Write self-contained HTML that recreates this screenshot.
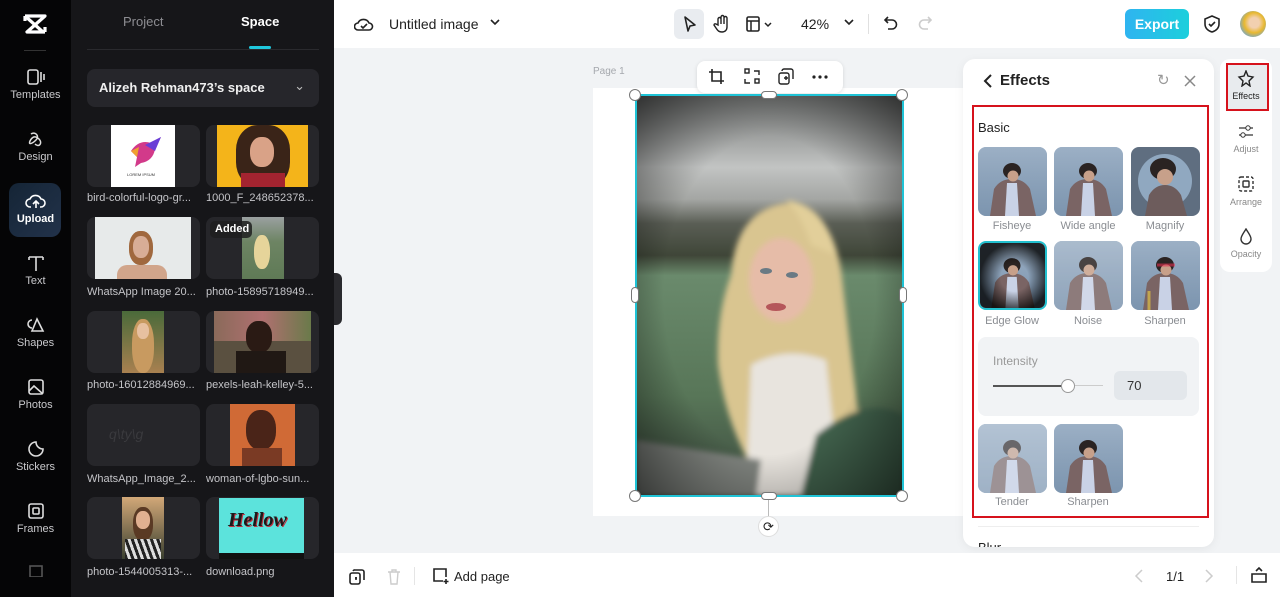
<!DOCTYPE html>
<html><head><meta charset="utf-8">
<style>
*{box-sizing:border-box;margin:0;padding:0}
body{width:1280px;height:597px;overflow:hidden;font-family:"Liberation Sans",sans-serif;background:#f1f3f5;position:relative}
.abs{position:absolute}
.rail{left:0;top:0;width:71px;height:597px;background:#050506}
.ri{position:absolute;left:0;width:71px;text-align:center;color:#c9c9cc;font-size:11px}
.ri svg{display:block;margin:0 auto 3px}
.panel{left:71px;top:0;width:263px;height:597px;background:#161619}
.tile{position:absolute;width:113px;height:62px;background:#26262a;border-radius:8px;overflow:hidden}
.lab{position:absolute;color:#c4c4c8;font-size:11px;white-space:nowrap}
.top{left:334px;top:0;width:946px;height:48px;background:#fff}
.bot{left:334px;top:553px;width:946px;height:44px;background:#fff}
.eff{left:963px;top:59px;width:251px;height:488px;background:#fff;border-radius:12px;box-shadow:0 2px 10px rgba(0,0,0,.06);overflow:hidden}
.th{position:absolute;width:69px;height:69px;border-radius:8px;overflow:hidden}
.tl{position:absolute;width:80px;text-align:center;font-size:11px;color:#8a8d92}
</style></head><body>
<svg width="0" height="0" style="position:absolute"><defs>
<symbol id="man" viewBox="0 0 69 69"><rect width="69" height="69" fill="#8aa2bb"/><rect y="0" width="69" height="69" fill="url(#wv)"/><path d="M12 69 L16 42 Q22 32 34 32 Q46 32 52 42 L58 69Z" fill="#7a6464"/><path d="M29 36 L39 36 L41 69 L27 69Z" fill="#c9d2e6"/><ellipse cx="34" cy="24" rx="9" ry="8" fill="#2a2322"/><ellipse cx="35" cy="29" rx="5.5" ry="5.5" fill="#c7a08a"/></symbol>
<linearGradient id="wv" x1="0" y1="0" x2="0" y2="1"><stop offset="0" stop-color="#a8b9cc" stop-opacity=".6"/><stop offset="1" stop-color="#6f88a3" stop-opacity=".5"/></linearGradient>
</defs></svg>

<div class="abs rail">
 <svg class="abs" style="left:22px;top:13px" width="26" height="22" viewBox="0 0 26 22"><path d="M3 3 L23 3 L5 19 L23 19 M3 3 L21 19 M3 3 L3 8 M23 19 L23 14" stroke="#fff" stroke-width="3.2" fill="none" stroke-linejoin="round"/></svg>
 <div class="abs" style="left:24px;top:50px;width:22px;height:1px;background:#333"></div>
 <div class="ri" style="top:68px"><svg width="20" height="18"><rect x="2" y="2" width="10" height="14" rx="2" fill="none" stroke="#ddd" stroke-width="1.6"/><path d="M15 4v10M18 6v6" stroke="#ddd" stroke-width="1.6"/></svg>Templates</div>
 <div class="ri" style="top:130px"><svg width="20" height="18"><path d="M5 4c4-3 9 2 5 6s-8 5-6 1 5-6 9-2 0 9-4 5" stroke="#ddd" stroke-width="1.5" fill="none"/></svg>Design</div>
 <div class="abs" style="left:9px;top:183px;width:52px;height:54px;border-radius:10px;background:linear-gradient(135deg,#152536,#22324a)"></div>
 <div class="ri" style="top:192px;color:#fff;font-weight:bold"><svg width="22" height="18"><path d="M6 15H5a4 4 0 010-8 6 6 0 0111 0 4 4 0 010 8h-1M11 16V9M8 12l3-3 3 3" stroke="#fff" stroke-width="1.6" fill="none"/></svg>Upload</div>
 <div class="ri" style="top:254px"><svg width="20" height="18"><path d="M3 3h14M10 3v14M3 3v3M17 3v3" stroke="#ddd" stroke-width="1.6" fill="none"/></svg>Text</div>
 <div class="ri" style="top:316px"><svg width="20" height="18"><path d="M6 4a4 4 0 100 8M11 3l6 12H6z" stroke="#ddd" stroke-width="1.6" fill="none"/></svg>Shapes</div>
 <div class="ri" style="top:378px"><svg width="20" height="18"><rect x="3" y="2" width="14" height="14" rx="2" fill="none" stroke="#ddd" stroke-width="1.6"/><path d="M3 13l5-5 9 8" stroke="#ddd" stroke-width="1.6" fill="none"/></svg>Photos</div>
 <div class="ri" style="top:440px"><svg width="20" height="18"><path d="M10 2a7 7 0 107 7 7 7 0 01-7-7z" stroke="#ddd" stroke-width="1.6" fill="none"/></svg>Stickers</div>
 <div class="ri" style="top:502px"><svg width="20" height="18"><rect x="3" y="2" width="14" height="14" rx="2" fill="none" stroke="#ddd" stroke-width="1.6"/><rect x="7" y="6" width="6" height="6" rx="1" fill="none" stroke="#ddd" stroke-width="1.6"/></svg>Frames</div>
 <div class="ri" style="top:563px"><svg width="20" height="14"><rect x="4" y="3" width="12" height="11" fill="none" stroke="#555" stroke-width="1.6"/></svg></div>
</div>

<div class="abs panel">
 <div class="abs" style="left:52px;top:14px;color:#8d8d92;font-size:13px">Project</div>
 <div class="abs" style="left:170px;top:14px;color:#fff;font-size:13px;font-weight:bold">Space</div>
 <div class="abs" style="left:178px;top:46px;width:22px;height:3px;background:#1fc7dc;border-radius:2px"></div>
 <div class="abs" style="left:16px;top:49px;width:232px;height:1px;background:#2a2a2e"></div>
 <div class="abs" style="left:16px;top:69px;width:232px;height:38px;border-radius:8px;background:#26262b;color:#f0f0f0;font-size:13px;font-weight:bold;padding:11px 12px">Alizeh Rehman473’s space<span style="position:absolute;right:14px;top:9px;font-weight:normal;color:#bbb">⌄</span></div>

 <div class="tile" style="left:16px;top:125px"><div class="abs" style="left:24px;top:0;width:64px;height:62px;background:#fff"></div><svg class="abs" style="left:38px;top:8px" width="38" height="36"><path d="M6 18 Q14 6 26 10 L36 4 L30 16 Q28 28 16 30 L10 34 L12 24Z" fill="#d23a8a"/><path d="M20 12 L36 4 L30 18Z" fill="#6a3ed6"/><path d="M6 18 L14 14 L12 24Z" fill="#f0a030"/></svg><div class="abs" style="left:40px;top:47px;font-size:4px;color:#333">LOREM IPSUM</div></div>
 <div class="tile" style="left:135px;top:125px"><div class="abs" style="left:11px;top:0;width:91px;height:62px;background:#f4b41a"></div><div class="abs" style="left:30px;top:0;width:54px;height:62px;border-radius:40%;background:#3a2418"></div><div class="abs" style="left:44px;top:12px;width:24px;height:30px;border-radius:45%;background:#d9a287"></div><div class="abs" style="left:35px;top:48px;width:44px;height:14px;background:#a32430"></div></div>
 <div class="lab" style="left:16px;top:192px">bird-colorful-logo-gr...</div>
 <div class="lab" style="left:135px;top:192px">1000_F_248652378...</div>

 <div class="tile" style="left:16px;top:217px"><div class="abs" style="left:8px;top:0;width:96px;height:62px;background:#e7eaea"></div><div class="abs" style="left:42px;top:14px;width:24px;height:34px;border-radius:45%;background:#a0683e"></div><div class="abs" style="left:46px;top:19px;width:16px;height:22px;border-radius:45%;background:#d8ad96"></div><div class="abs" style="left:30px;top:48px;width:50px;height:14px;border-radius:10px 10px 0 0;background:#d1a58b"></div></div>
 <div class="tile" style="left:135px;top:217px"><div class="abs" style="left:36px;top:0;width:42px;height:62px;background:linear-gradient(#9aa0a0,#6d8463 40%,#5f7a56)"></div><div class="abs" style="left:48px;top:18px;width:16px;height:34px;border-radius:45%;background:#e6d49a"></div><div class="abs" style="left:4px;top:4px;width:42px;height:17px;border-radius:5px;background:rgba(30,30,30,.85);color:#fff;font-size:11px;font-weight:bold;padding:2px 5px">Added</div></div>
 <div class="lab" style="left:16px;top:286px">WhatsApp Image 20...</div>
 <div class="lab" style="left:135px;top:286px">photo-15895718949...</div>

 <div class="tile" style="left:16px;top:311px"><div class="abs" style="left:35px;top:0;width:42px;height:62px;background:linear-gradient(#4a6a3a,#a88050)"></div><div class="abs" style="left:45px;top:8px;width:22px;height:54px;border-radius:45%;background:#c89a60"></div><div class="abs" style="left:50px;top:12px;width:12px;height:16px;border-radius:45%;background:#e7c0a0"></div></div>
 <div class="tile" style="left:135px;top:311px"><div class="abs" style="left:8px;top:0;width:97px;height:62px;background:#5a5040"></div><div class="abs" style="left:8px;top:0;width:97px;height:30px;background:linear-gradient(90deg,#8a6a5a,#b07070,#6a7a4a)"></div><div class="abs" style="left:40px;top:10px;width:26px;height:32px;border-radius:45%;background:#2a1a14"></div><div class="abs" style="left:30px;top:40px;width:50px;height:22px;background:#201814"></div></div>
 <div class="lab" style="left:16px;top:379px">photo-16012884969...</div>
 <div class="lab" style="left:135px;top:379px">pexels-leah-kelley-5...</div>

 <div class="tile" style="left:16px;top:404px"><div class="abs" style="left:22px;top:22px;font-size:14px;color:#3a3a3e;font-style:italic">q\ty\g</div></div>
 <div class="tile" style="left:135px;top:404px"><div class="abs" style="left:24px;top:0;width:65px;height:62px;background:#d06a36"></div><div class="abs" style="left:40px;top:6px;width:30px;height:40px;border-radius:45%;background:#4a2418"></div><div class="abs" style="left:36px;top:44px;width:40px;height:18px;background:#7a3a24"></div></div>
 <div class="lab" style="left:16px;top:473px">WhatsApp_Image_2...</div>
 <div class="lab" style="left:135px;top:473px">woman-of-lgbo-sun...</div>

 <div class="tile" style="left:16px;top:497px"><div class="abs" style="left:35px;top:0;width:42px;height:62px;background:linear-gradient(#d2a878,#3a4030)"></div><div class="abs" style="left:46px;top:10px;width:20px;height:34px;border-radius:45%;background:#5a3a24"></div><div class="abs" style="left:49px;top:14px;width:14px;height:18px;border-radius:45%;background:#e0b090"></div><div class="abs" style="left:38px;top:42px;width:36px;height:20px;background:repeating-linear-gradient(70deg,#222 0 3px,#ddd 3px 6px)"></div></div>
 <div class="tile" style="left:135px;top:497px"><div class="abs" style="left:13px;top:1px;width:85px;height:57px;background:#5ce3dc"></div><div class="abs" style="left:22px;top:12px;font:italic bold 20px 'Liberation Serif',serif;color:#1a1a1a;text-shadow:1px 1px 0 #c03040">Hellow</div><div class="abs" style="left:13px;top:56px;width:85px;height:6px;background:#111"></div></div>
 <div class="lab" style="left:16px;top:566px">photo-1544005313-...</div>
 <div class="lab" style="left:135px;top:566px">download.png</div>
</div>
<div class="abs" style="left:334px;top:273px;width:8px;height:52px;background:#2a2a2e;border-radius:0 6px 6px 0"></div>

<div class="abs top">
 <svg class="abs" style="left:20px;top:15px" width="20" height="18"><path d="M5 15H4a3.5 3.5 0 010-7 6 6 0 0111 0 3.5 3.5 0 010 7H5zM7 11l2 2 4-4" stroke="#222" stroke-width="1.6" fill="none"/></svg>
 <div class="abs" style="left:55px;top:16px;font-size:14px;color:#222">Untitled image</div>
 <svg class="abs" style="left:156px;top:19px" width="10" height="8"><path d="M1 1l4 4 4-4" stroke="#222" stroke-width="1.6" fill="none"/></svg>
 <div class="abs" style="left:340px;top:9px;width:30px;height:30px;border-radius:6px;background:#e9ecf0"></div>
 <svg class="abs" style="left:348px;top:15px" width="16" height="18"><path d="M3 2l10 8-5 1-2 5z" stroke="#222" stroke-width="1.6" fill="none" stroke-linejoin="round"/></svg>
 <svg class="abs" style="left:379px;top:14px" width="18" height="20"><path d="M5 11V5a1.4 1.4 0 013 0v5V3a1.4 1.4 0 013 0v7V4a1.4 1.4 0 013 0v9c0 3-2 5-5 5s-4-1-6-4l-2-3a1.3 1.3 0 012-1z" stroke="#222" stroke-width="1.4" fill="none"/></svg>
 <svg class="abs" style="left:411px;top:15px" width="30" height="18"><rect x="2" y="2" width="12" height="14" rx="1.5" stroke="#222" stroke-width="1.6" fill="none"/><path d="M2 6h12M6 6v10M20 8l3 3 3-3" stroke="#222" stroke-width="1.5" fill="none"/></svg>
 <div class="abs" style="left:467px;top:16px;font-size:14px;color:#222">42%</div>
 <svg class="abs" style="left:510px;top:19px" width="10" height="8"><path d="M1 1l4 4 4-4" stroke="#222" stroke-width="1.6" fill="none"/></svg>
 <div class="abs" style="left:534px;top:14px;width:1px;height:20px;background:#e0e0e0"></div>
 <svg class="abs" style="left:549px;top:15px" width="16" height="18"><path d="M5 2L2 5l3 3M2 5h7a4.5 4.5 0 010 9H5" stroke="#222" stroke-width="1.6" fill="none"/></svg>
 <svg class="abs" style="left:583px;top:15px" width="16" height="18"><path d="M11 2l3 3-3 3M14 5H7a4.5 4.5 0 000 9h4" stroke="#ccc" stroke-width="1.6" fill="none"/></svg>
 <div class="abs" style="left:791px;top:9px;width:64px;height:30px;border-radius:6px;background:linear-gradient(90deg,#2fb4f0,#1ccfdc);color:#fff;font-size:14px;font-weight:bold;text-align:center;line-height:30px">Export</div>
 <svg class="abs" style="left:869px;top:14px" width="18" height="20"><path d="M9 2l7 3v5c0 4-3 7-7 8-4-1-7-4-7-8V5z M6 10l2 2 4-4" stroke="#222" stroke-width="1.6" fill="none"/></svg>
 <div class="abs" style="left:906px;top:11px;width:26px;height:26px;border-radius:50%;background:radial-gradient(circle at 55% 45%,#f2d0b0 25%,#e8b830 50%,#6aa6d8 80%)"></div>
</div>

<!-- canvas page -->
<div class="abs" style="left:593px;top:66px;font-size:10px;color:#a5a8ad">Page 1</div>
<div class="abs" style="left:593px;top:88px;width:380px;height:428px;background:#fff"></div>
<div class="abs" style="left:697px;top:61px;width:146px;height:32px;background:#fff;border-radius:8px;box-shadow:0 1px 4px rgba(0,0,0,.12)"></div>
<svg class="abs" style="left:708px;top:68px" width="124" height="18"><path d="M4 1v12h12M1 4h12v12" stroke="#222" stroke-width="1.6" fill="none"/><g transform="translate(36,0)" stroke="#222" stroke-width="1.4" fill="none"><rect x="1" y="1" width="4" height="4"/><rect x="11" y="11" width="4" height="4"/><path d="M10 3h5v4M6 15H1v-4"/></g><g transform="translate(70,0)" stroke="#222" stroke-width="1.4" fill="none"><rect x="1" y="5" width="10" height="11" rx="2"/><path d="M4 3a2 2 0 012-2h7a2 2 0 012 2v8M6 10h4M8 8v4"/></g><g transform="translate(104,7)" fill="#222"><circle cx="2" cy="2" r="1.6"/><circle cx="8" cy="2" r="1.6"/><circle cx="14" cy="2" r="1.6"/></g></svg>

<svg class="abs" style="left:636px;top:95px" width="267" height="401" viewBox="0 0 267 401">
<defs>
<linearGradient id="bg" x1="0" y1="0" x2="0" y2="1"><stop offset="0" stop-color="#6f7170"/><stop offset=".18" stop-color="#c2c4c3"/><stop offset=".26" stop-color="#a4a6a3"/><stop offset=".32" stop-color="#5a5e55"/><stop offset=".4" stop-color="#3f4638"/><stop offset=".45" stop-color="#6a8a6c"/><stop offset=".75" stop-color="#587658"/><stop offset="1" stop-color="#3c4a3e"/></linearGradient>
<radialGradient id="vig" cx=".5" cy=".5" r=".72"><stop offset=".55" stop-color="#000" stop-opacity="0"/><stop offset="1" stop-color="#000" stop-opacity=".6"/></radialGradient>
<filter id="bl"><feGaussianBlur stdDeviation="3"/></filter>
</defs>
<rect width="267" height="401" fill="url(#bg)"/>
<g filter="url(#bl)">
<path d="M95 180 Q100 115 150 108 Q195 112 205 175 Q215 260 225 340 L120 380 Q90 330 82 270 Q80 220 95 180Z" fill="#d9c590"/>
<ellipse cx="145" cy="185" rx="32" ry="42" fill="#e6bca8"/>
<path d="M150 105 Q190 110 200 160 L175 150 Q165 120 150 105Z" fill="#e2cf9a"/>
<path d="M115 270 Q150 250 190 265 L205 401 L110 401Z" fill="#e8e4de"/>
<path d="M180 340 Q230 300 267 320 L267 401 L165 401Z" fill="#41604c"/>
<path d="M0 345 L125 365 L120 401 L0 401Z" fill="#80847f"/>
</g>
<ellipse cx="130" cy="176" rx="6" ry="3" fill="#6a7a84"/><ellipse cx="156" cy="180" rx="6" ry="3" fill="#6a7a84"/>
<ellipse cx="140" cy="212" rx="10" ry="4" fill="#b5565a"/>
<rect width="267" height="401" fill="url(#vig)"/>
</svg>
<div class="abs" style="left:635px;top:94px;width:269px;height:403px;border:2px solid #1fc3d6"></div>
<div class="abs" style="left:629px;top:89px;width:12px;height:12px;border-radius:50%;background:#fff;border:1px solid #777"></div>
<div class="abs" style="left:896px;top:89px;width:12px;height:12px;border-radius:50%;background:#fff;border:1px solid #777"></div>
<div class="abs" style="left:629px;top:490px;width:12px;height:12px;border-radius:50%;background:#fff;border:1px solid #777"></div>
<div class="abs" style="left:896px;top:490px;width:12px;height:12px;border-radius:50%;background:#fff;border:1px solid #777"></div>
<div class="abs" style="left:761px;top:91px;width:16px;height:8px;border-radius:4px;background:#fff;border:1px solid #777"></div>
<div class="abs" style="left:761px;top:492px;width:16px;height:8px;border-radius:4px;background:#fff;border:1px solid #777"></div>
<div class="abs" style="left:631px;top:287px;width:8px;height:16px;border-radius:4px;background:#fff;border:1px solid #777"></div>
<div class="abs" style="left:899px;top:287px;width:8px;height:16px;border-radius:4px;background:#fff;border:1px solid #777"></div>
<div class="abs" style="left:768px;top:500px;width:1px;height:16px;background:#bbb"></div>
<div class="abs" style="left:758px;top:516px;width:21px;height:21px;border-radius:50%;background:#fff;border:1px solid #ddd;font-size:13px;text-align:center;line-height:19px;color:#222">⟳</div>

<div class="abs eff">
 <svg class="abs" style="left:20px;top:15px" width="10" height="14"><path d="M8 1L2 7l6 6" stroke="#222" stroke-width="2" fill="none"/></svg>
 <div class="abs" style="left:37px;top:13px;font-size:15px;font-weight:bold;color:#222">Effects</div>
 <div class="abs" style="left:194px;top:12px;font-size:15px;color:#999">↻</div>
 <svg class="abs" style="left:221px;top:16px" width="12" height="12"><path d="M1 1l10 10M11 1L1 11" stroke="#888" stroke-width="1.5"/></svg>
 <div class="abs" style="left:9px;top:46px;width:237px;height:413px;border:2px solid #d6121c"></div>
 <div class="abs" style="left:15px;top:61px;font-size:13px;color:#222">Basic</div>
 <svg class="th" style="left:15px;top:88px"><use href="#man"/></svg>
 <svg class="th" style="left:91px;top:88px"><use href="#man"/></svg>
 <svg class="th" style="left:168px;top:88px"><rect width="69" height="69" fill="#5f6e80"/><circle cx="34" cy="34" r="27" fill="#90a8c0"/><path d="M14 69 L18 48 Q24 38 34 38 Q44 38 50 48 L56 69Z" fill="#6d5c5c"/><ellipse cx="32" cy="22" rx="13" ry="11" fill="#2a2322"/><ellipse cx="34" cy="30" rx="8" ry="8" fill="#c7a08a"/></svg>
 <div class="tl" style="left:9px;top:161px">Fisheye</div>
 <div class="tl" style="left:85px;top:161px">Wide angle</div>
 <div class="tl" style="left:162px;top:161px">Magnify</div>
 <svg class="th" style="left:15px;top:182px;border:2px solid #22c0cf"><use href="#man"/><rect width="69" height="69" fill="url(#vg2)"/><defs><radialGradient id="vg2"><stop offset=".4" stop-color="#000" stop-opacity="0"/><stop offset="1" stop-color="#000" stop-opacity=".8"/></radialGradient></defs></svg>
 <svg class="th" style="left:91px;top:182px"><use href="#man"/><rect width="69" height="69" fill="#fff" opacity=".15"/></svg>
 <svg class="th" style="left:168px;top:182px"><use href="#man"/><path d="M26 24 L44 24" stroke="#e03050" stroke-width="3" opacity=".6"/><path d="M18 50 L18 69" stroke="#f0d040" stroke-width="3" opacity=".6"/></svg>
 <div class="tl" style="left:9px;top:256px">Edge Glow</div>
 <div class="tl" style="left:85px;top:256px">Noise</div>
 <div class="tl" style="left:162px;top:256px">Sharpen</div>
 <div class="abs" style="left:15px;top:278px;width:221px;height:79px;background:#f1f3f5;border-radius:8px"></div>
 <div class="abs" style="left:30px;top:295px;font-size:12px;color:#999">Intensity</div>
 <div class="abs" style="left:30px;top:326px;width:76px;height:2px;background:#555"></div>
 <div class="abs" style="left:106px;top:326px;width:34px;height:1px;background:#ccc"></div>
 <div class="abs" style="left:98px;top:320px;width:14px;height:14px;border-radius:50%;background:#fff;border:1px solid #999"></div>
 <div class="abs" style="left:151px;top:312px;width:73px;height:29px;background:#e3e7eb;border-radius:6px;font-size:13px;color:#333;padding:7px 13px">70</div>
 <svg class="th" style="left:15px;top:365px"><use href="#man"/><rect width="69" height="69" fill="#dfe8f0" opacity=".35"/></svg>
 <svg class="th" style="left:91px;top:365px"><use href="#man"/></svg>
 <div class="tl" style="left:9px;top:437px">Tender</div>
 <div class="tl" style="left:85px;top:437px">Sharpen</div>
 <div class="abs" style="left:15px;top:467px;width:221px;height:1px;background:#eee"></div>
 <div class="abs" style="left:15px;top:481px;font-size:13px;color:#222">Blur</div>
</div>

<div class="abs" style="left:1220px;top:59px;width:52px;height:213px;background:#fff;border-radius:10px"></div>
<div class="abs" style="left:1226px;top:63px;width:43px;height:48px;background:#e8ebee;border:2px solid #d6121c"></div>
<div class="abs" style="left:1220px;top:70px;width:52px;text-align:center;font-size:9px;color:#222"><svg width="18" height="17" style="display:block;margin:0 auto 4px"><path d="M9 1l2 5 5 1-4 4 1 5-4-3-4 3 1-5-4-4 5-1z" stroke="#222" stroke-width="1.4" fill="none"/></svg>Effects</div>
<div class="abs" style="left:1220px;top:123px;width:52px;text-align:center;font-size:9px;color:#888"><svg width="18" height="17" style="display:block;margin:0 auto 4px"><path d="M2 5h14M2 12h14" stroke="#333" stroke-width="1.3"/><circle cx="11" cy="5" r="2.2" fill="#fff" stroke="#333"/><circle cx="6" cy="12" r="2.2" fill="#fff" stroke="#333"/></svg>Adjust</div>
<div class="abs" style="left:1220px;top:176px;width:52px;text-align:center;font-size:9px;color:#888"><svg width="18" height="17" style="display:block;margin:0 auto 4px"><rect x="2" y="1" width="14" height="14" rx="2" stroke="#333" stroke-width="1.4" fill="none" stroke-dasharray="3 2"/><rect x="6" y="5" width="6" height="6" rx="1" stroke="#333" stroke-width="1.4" fill="none"/></svg>Arrange</div>
<div class="abs" style="left:1220px;top:228px;width:52px;text-align:center;font-size:9px;color:#888"><svg width="18" height="17" style="display:block;margin:0 auto 4px"><path d="M9 1C6 6 4 8 4 11a5 5 0 0010 0c0-3-2-5-5-10z" stroke="#333" stroke-width="1.4" fill="none"/></svg>Opacity</div>

<div class="abs bot">
 <svg class="abs" style="left:15px;top:16px" width="16" height="16"><rect x="1" y="4" width="10" height="11" rx="2" stroke="#222" stroke-width="1.6" fill="none"/><path d="M4 2a2 2 0 012-1h7a2 2 0 012 2v8M6 9h2M7 8v3" stroke="#222" stroke-width="1.6" fill="none"/></svg>
 <svg class="abs" style="left:53px;top:16px" width="14" height="16"><path d="M1 3h12M5 3V1h4v2M3 3l1 12h6l1-12" stroke="#ccc" stroke-width="1.4" fill="none"/></svg>
 <div class="abs" style="left:80px;top:14px;width:1px;height:18px;background:#e5e5e5"></div>
 <svg class="abs" style="left:98px;top:14px" width="18" height="18"><path d="M11 14H2V2h12v8M14 12v5M11.5 14.5h5" stroke="#222" stroke-width="1.6" fill="none"/></svg>
 <div class="abs" style="left:120px;top:16px;font-size:13px;color:#222">Add page</div>
 <svg class="abs" style="left:800px;top:16px" width="10" height="14"><path d="M8 1L2 7l6 6" stroke="#ccc" stroke-width="1.5" fill="none"/></svg>
 <div class="abs" style="left:832px;top:16px;font-size:13px;color:#222">1/1</div>
 <svg class="abs" style="left:870px;top:16px" width="10" height="14"><path d="M2 1l6 6-6 6" stroke="#ccc" stroke-width="1.5" fill="none"/></svg>
 <div class="abs" style="left:902px;top:13px;width:1px;height:18px;background:#e5e5e5"></div>
 <svg class="abs" style="left:916px;top:13px" width="18" height="18"><path d="M2 8h14v8H2zM6 5l3-3 3 3" stroke="#222" stroke-width="1.6" fill="none"/></svg>
</div>
</body></html>
